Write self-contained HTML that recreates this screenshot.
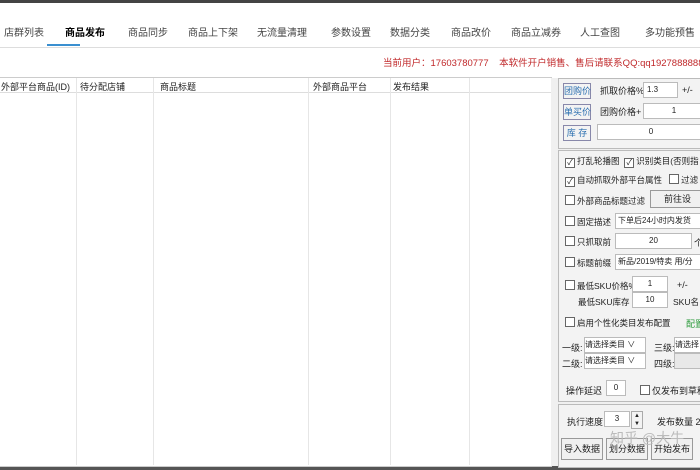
<!DOCTYPE html><html><head><meta charset="utf-8"><style>
body{margin:0;width:700px;height:470px;background:#fff;font-family:"Liberation Sans","Noto Sans CJK SC",sans-serif;font-size:9px;color:#222;position:relative;overflow:hidden}
.a{position:absolute;white-space:nowrap}
.tab{position:absolute;top:24px;font-size:10px;color:#444}
.in{position:absolute;border:1px solid #bbb;background:#fff;text-align:center;height:14px;line-height:14px;font-size:8px}
.cb{display:inline-block;width:8px;height:8px;border:1px solid #666;background:#fff;vertical-align:-1px;margin-right:2px;font-size:8px;line-height:8px;text-align:center}
.btn{position:absolute;border:1px solid #999;background:#f0f0f0;text-align:center;height:20px;line-height:20px;font-size:9px}
.box{position:absolute;border:1px solid #bbb;background:#f3f3f3}
.r{font-size:8.5px}
</style></head><body>
<div class="a" style="top:0;left:0;width:700px;height:3px;background:#444"></div>
<div class="a" style="top:466px;left:0;width:700px;height:4px;background:#555"></div>
<div class="tab" style="left:4px">店群列表</div>
<div class="tab" style="left:65px;color:#000;font-weight:bold">商品发布</div>
<div class="tab" style="left:128px">商品同步</div>
<div class="tab" style="left:188px">商品上下架</div>
<div class="tab" style="left:257px">无流量清理</div>
<div class="tab" style="left:331px">参数设置</div>
<div class="tab" style="left:390px">数据分类</div>
<div class="tab" style="left:451px">商品改价</div>
<div class="tab" style="left:511px">商品立减券</div>
<div class="tab" style="left:580px">人工查图</div>
<div class="tab" style="left:645px">多功能预售</div>
<div class="a" style="top:44px;left:47px;width:33px;height:2px;background:#3a8fd0"></div>
<div class="a" style="top:47px;left:0;width:700px;height:1px;background:#ddd"></div>
<div class="a" style="top:55px;left:383px;color:#c0282a;font-size:9.5px">当前用户：17603780777 &nbsp;&nbsp;&nbsp;本软件开户销售、售后请联系QQ:qq1927888888，</div>
<div class="a" style="top:77px;left:0;width:551px;height:388px;border:1px solid #ccc;border-left:none;background:#fff"></div>
<div class="a" style="top:92px;left:0;width:551px;height:1px;background:#ddd"></div>
<div class="a" style="top:80px;left:1px">外部平台商品(ID)</div>
<div class="a" style="top:80px;left:80px">待分配店铺</div>
<div class="a" style="top:80px;left:160px">商品标题</div>
<div class="a" style="top:80px;left:313px">外部商品平台</div>
<div class="a" style="top:80px;left:393px">发布结果</div>
<div class="a" style="top:78px;left:76px;width:1px;height:387px;background:#e6e6e6"></div>
<div class="a" style="top:78px;left:153px;width:1px;height:387px;background:#e6e6e6"></div>
<div class="a" style="top:78px;left:308px;width:1px;height:387px;background:#e6e6e6"></div>
<div class="a" style="top:78px;left:390px;width:1px;height:387px;background:#e6e6e6"></div>
<div class="a" style="top:78px;left:469px;width:1px;height:387px;background:#e6e6e6"></div>
<div class="a" style="top:78px;left:551px;width:149px;height:388px;background:#f0f0f0"></div>
<div class="box" style="top:78px;left:558px;width:145px;height:69px"></div>
<div class="a" style="top:83px;left:563px;width:26px;height:14px;border:1px solid #88a;color:#2a6fb0;line-height:14px;text-align:center">团购价</div>
<div class="a" style="top:84px;left:600px">抓取价格%</div><div class="in" style="top:82px;left:643px;width:30px;text-align:left;padding-left:3px">1.3</div><div class="a" style="top:85px;left:682px">+/-</div>
<div class="a" style="top:104px;left:563px;width:26px;height:14px;border:1px solid #88a;color:#2a6fb0;line-height:14px;text-align:center">单买价</div>
<div class="a" style="top:105px;left:600px">团购价格+</div><div class="in" style="top:103px;left:643px;width:60px">1</div>
<div class="a" style="top:125px;left:563px;width:26px;height:14px;border:1px solid #88a;color:#2a6fb0;line-height:14px;text-align:center">库 存</div>
<div class="in" style="top:124px;left:597px;width:106px">0</div>
<div class="box" style="top:150px;left:558px;width:145px;height:250px"></div>
<div class="a r" style="top:155px;left:565px"><span class="cb">✓</span>打乱轮播图 &nbsp;<span class="cb">✓</span>识别类目(否则指</div>
<div class="a r" style="top:174px;left:565px"><span class="cb">✓</span>自动抓取外部平台属性 &nbsp;&nbsp;<span class="cb"></span>过滤</div>
<div class="a r" style="top:195px;left:565px"><span class="cb"></span>外部商品标题过滤</div><div class="btn" style="top:190px;left:650px;width:53px;height:16px;line-height:16px">前往设</div>
<div class="a r" style="top:216px;left:565px"><span class="cb"></span>固定描述</div><div class="in" style="top:213px;left:615px;width:88px;text-align:left;padding-left:2px">下单后24小时内发货</div>
<div class="a r" style="top:236px;left:565px"><span class="cb"></span>只抓取前</div><div class="in" style="top:233px;left:615px;width:75px">20</div><div class="a" style="top:236px;left:694px">个</div>
<div class="a r" style="top:257px;left:565px"><span class="cb"></span>标题前缀</div><div class="in" style="top:254px;left:615px;width:88px;text-align:left;padding-left:2px">新品/2019/特卖 用/分</div>
<div class="a r" style="top:280px;left:565px"><span class="cb"></span>最低SKU价格%</div><div class="in" style="top:276px;left:632px;width:34px">1</div><div class="a" style="top:280px;left:677px">+/-</div>
<div class="a r" style="top:296px;left:578px">最低SKU库存</div><div class="in" style="top:292px;left:632px;width:34px">10</div><div class="a r" style="top:296px;left:673px">SKU名</div>
<div class="a r" style="top:317px;left:565px"><span class="cb"></span>启用个性化类目发布配置</div><div class="a" style="top:317px;left:686px;color:#2a9a3a">配置</div>
<div class="a" style="top:341px;left:562px">一级:</div><div class="in" style="top:337px;left:584px;width:60px;text-align:left">请选择类目 ∨</div><div class="a" style="top:341px;left:654px">三级:</div><div class="in" style="top:337px;left:674px;width:30px;text-align:left">请选择</div>
<div class="a" style="top:357px;left:562px">二级:</div><div class="in" style="top:353px;left:584px;width:60px;text-align:left">请选择类目 ∨</div><div class="a" style="top:357px;left:654px">四级:</div><div class="in" style="top:353px;left:674px;width:30px;background:#e8e8e8"></div>
<div class="a" style="top:384px;left:566px">操作延迟</div><div class="in" style="top:380px;left:606px;width:18px">0</div><div class="a" style="top:384px;left:640px"><span class="cb"></span>仅发布到草稿</div>
<div class="box" style="top:404px;left:558px;width:145px;height:62px"></div>
<div class="a" style="top:415px;left:567px">执行速度</div><div class="in" style="top:411px;left:604px;width:24px">3</div><div class="a" style="top:411px;left:631px;width:10px;height:16px;border:1px solid #aaa;font-size:6px;text-align:center;line-height:8px">▲<br>▼</div>
<div class="a" style="top:415px;left:657px">发布数量 2</div>
<div class="btn" style="top:438px;left:561px;width:40px">导入数据</div>
<div class="btn" style="top:438px;left:606px;width:40px">划分数据</div>
<div class="btn" style="top:438px;left:651px;width:40px">开始发布</div>
<div class="a" style="top:428px;left:610px;font-size:14px;color:#bbb">知乎 @大牛</div>
</body></html>
